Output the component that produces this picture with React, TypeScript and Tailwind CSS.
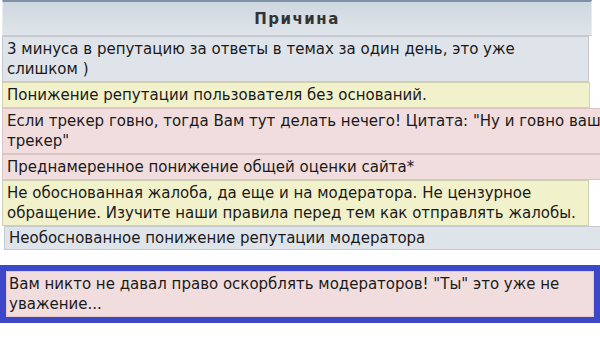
export default function App() {
  const font = { fontFamily: '"DejaVu Sans", Verdana, sans-serif' };
  return (
    <div className="w-[600px] h-[340px] bg-white overflow-hidden text-[15px] leading-[20px] text-[#1a1a1a]" style={font}>
      <div className="pl-[2px]">
        <div className="w-[590px] h-[36px] border-t-[2px] border-t-[#7d92a8] border-b border-b-[#c3cbd3] border-x border-x-[#e8ecef] bg-gradient-to-b from-[#cfd7df] to-[#dfe5ea] flex items-center justify-center font-bold tracking-[1.5px] text-[#333]">
          Причина
        </div>
        <div className="w-[587px] border border-[#c4cad0] bg-[#dfe4ea] px-[4px] py-[2px]">
          3 минуса в репутацию за ответы в темах за один день, это уже слишком )
        </div>
        <div className="w-[588px] border border-[#d4d2b0] bg-[#f1f1cb] px-[4px] py-[2px]">
          Понижение репутации пользователя без оснований.
        </div>
        <div className="w-[620px] border border-[#dcc4c4] bg-[#f1dddd] px-[4px] py-[2px]">
          <div className="w-[596px]">
            Если трекер говно, тогда Вам тут делать нечего! Цитата: "Ну и говно ваш трекер"
          </div>
        </div>
        <div className="w-[620px] border border-[#dcc4c4] bg-[#f1dddd] px-[4px] py-[2px]">
          Преднамеренное понижение общей оценки сайта*
        </div>
        <div className="w-[587px] border border-[#cfcfb4] bg-[#f1f1cb] px-[4px] py-[2px]">
          Не обоснованная жалоба, да еще и на модератора. Не цензурное обращение. Изучите наши правила перед тем как отправлять жалобы.
        </div>
        <div className="ml-[2px] w-[620px] border border-[#c4cad0] bg-[#dfe4ea] px-[4px] py-[1px]">
          Необоснованное понижение репутации модератора
        </div>
      </div>
      <div className="mt-[15px] w-[600px] border-[6px] border-[#3c48c8] bg-[#3c48c8]">
        <div className="border border-[#e6c8c8] bg-[#f1dddd] px-[2px] py-[2px]">
          Вам никто не давал право оскорблять модераторов! "Ты" это уже не уважение...
        </div>
      </div>
    </div>
  );
}
